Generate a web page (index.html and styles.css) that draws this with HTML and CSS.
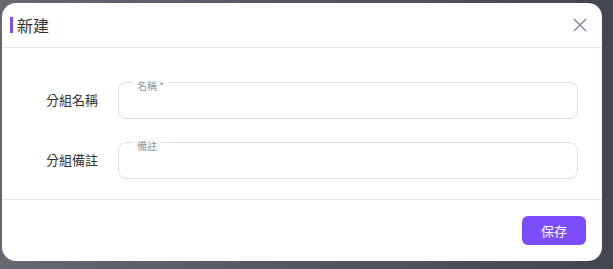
FILE: index.html
```html
<!DOCTYPE html>
<html lang="zh-Hant">
<head>
    <meta charset="utf-8">
    <title>新建</title>
    <link rel="stylesheet" href="styles.css">
</head>
<body>
    <div class="dialog">
        <header class="dialog-head">
            <h2 class="title">新建</h2>
            <button class="close" aria-label="關閉">
                <svg width="16" height="16" viewBox="0 0 16 16"><path d="M2 2 L14 14 M14 2 L2 14" stroke="currentColor" stroke-width="1.6" fill="none"/></svg>
            </button>
        </header>
        <form class="dialog-body">
            <div class="row">
                <label class="row-label">分組名稱</label>
                <fieldset class="field"><legend>名稱 *</legend><input type="text"></fieldset>
            </div>
            <div class="row">
                <label class="row-label">分組備註</label>
                <fieldset class="field"><legend>備註</legend><input type="text"></fieldset>
            </div>
        </form>
        <footer class="dialog-foot">
            <button class="save">保存</button>
        </footer>
    </div>
</body>
</html>
```
FILE: styles.css
```css
html, body {
    height: 100%;
}
body {
    margin: 0;
    background: linear-gradient(to right, #65686e, #42474f);
    font-family: "Noto Sans CJK TC", "Noto Sans", sans-serif;
    color: #333;
    overflow: hidden;
}

.dialog {
    width: 600px;
    height: 258px;
    margin: 3px 0 0 2px;
    background: #fff;
    border-radius: 14px;
    display: flex;
    flex-direction: column;
}

.dialog-head {
    flex-shrink: 0;
    height: 44px;
    display: flex;
    align-items: center;
    justify-content: space-between;
    padding: 0 14px 0 8px;
    border-bottom: 1px solid #e6e6e8;
}
.title {
    margin: 0;
    font-size: 16px;
    font-weight: 400;
    line-height: 16px;
    border-left: 3px solid #7c4dff;
    padding-left: 4px;
    color: #333;
}
.close {
    border: none;
    background: none;
    padding: 0;
    color: #8a93a2;
    display: flex;
    cursor: pointer;
}

.dialog-body {
    flex-shrink: 0;
    display: flex;
    flex-direction: column;
    gap: 14px;
    padding: 25px 24px 20px 44px;
    border-bottom: 1px solid #e6e6e8;
}
.row {
    display: flex;
    align-items: flex-end;
    gap: 20px;
}
.row-label {
    flex-shrink: 0;
    white-space: nowrap;
    font-size: 13px;
    color: #333;
    width: 52px;
    line-height: 37px;
    padding-bottom: 1px;
}
.field {
    flex: 1;
    min-width: 0;
    margin: 0;
    height: 46px;
    box-sizing: border-box;
    border: 1px solid #dcdfe6;
    border-radius: 8px;
    padding: 0 14px;
    display: flex;
}
.field legend {
    font-size: 10px;
    line-height: 10px;
    color: #8a8f99;
    padding: 8px 4px 0;
}
.field input {
    flex: 1;
    min-width: 0;
    border: none;
    outline: none;
    background: none;
    font: inherit;
    font-size: 13px;
}

.dialog-foot {
    display: flex;
    justify-content: flex-end;
    padding: 16px;
}
.save {
    width: 64px;
    height: 29px;
    border: none;
    border-radius: 6px;
    background: #7c4dff;
    color: #fff;
    font-family: inherit;
    font-size: 13px;
    cursor: pointer;
}
```
